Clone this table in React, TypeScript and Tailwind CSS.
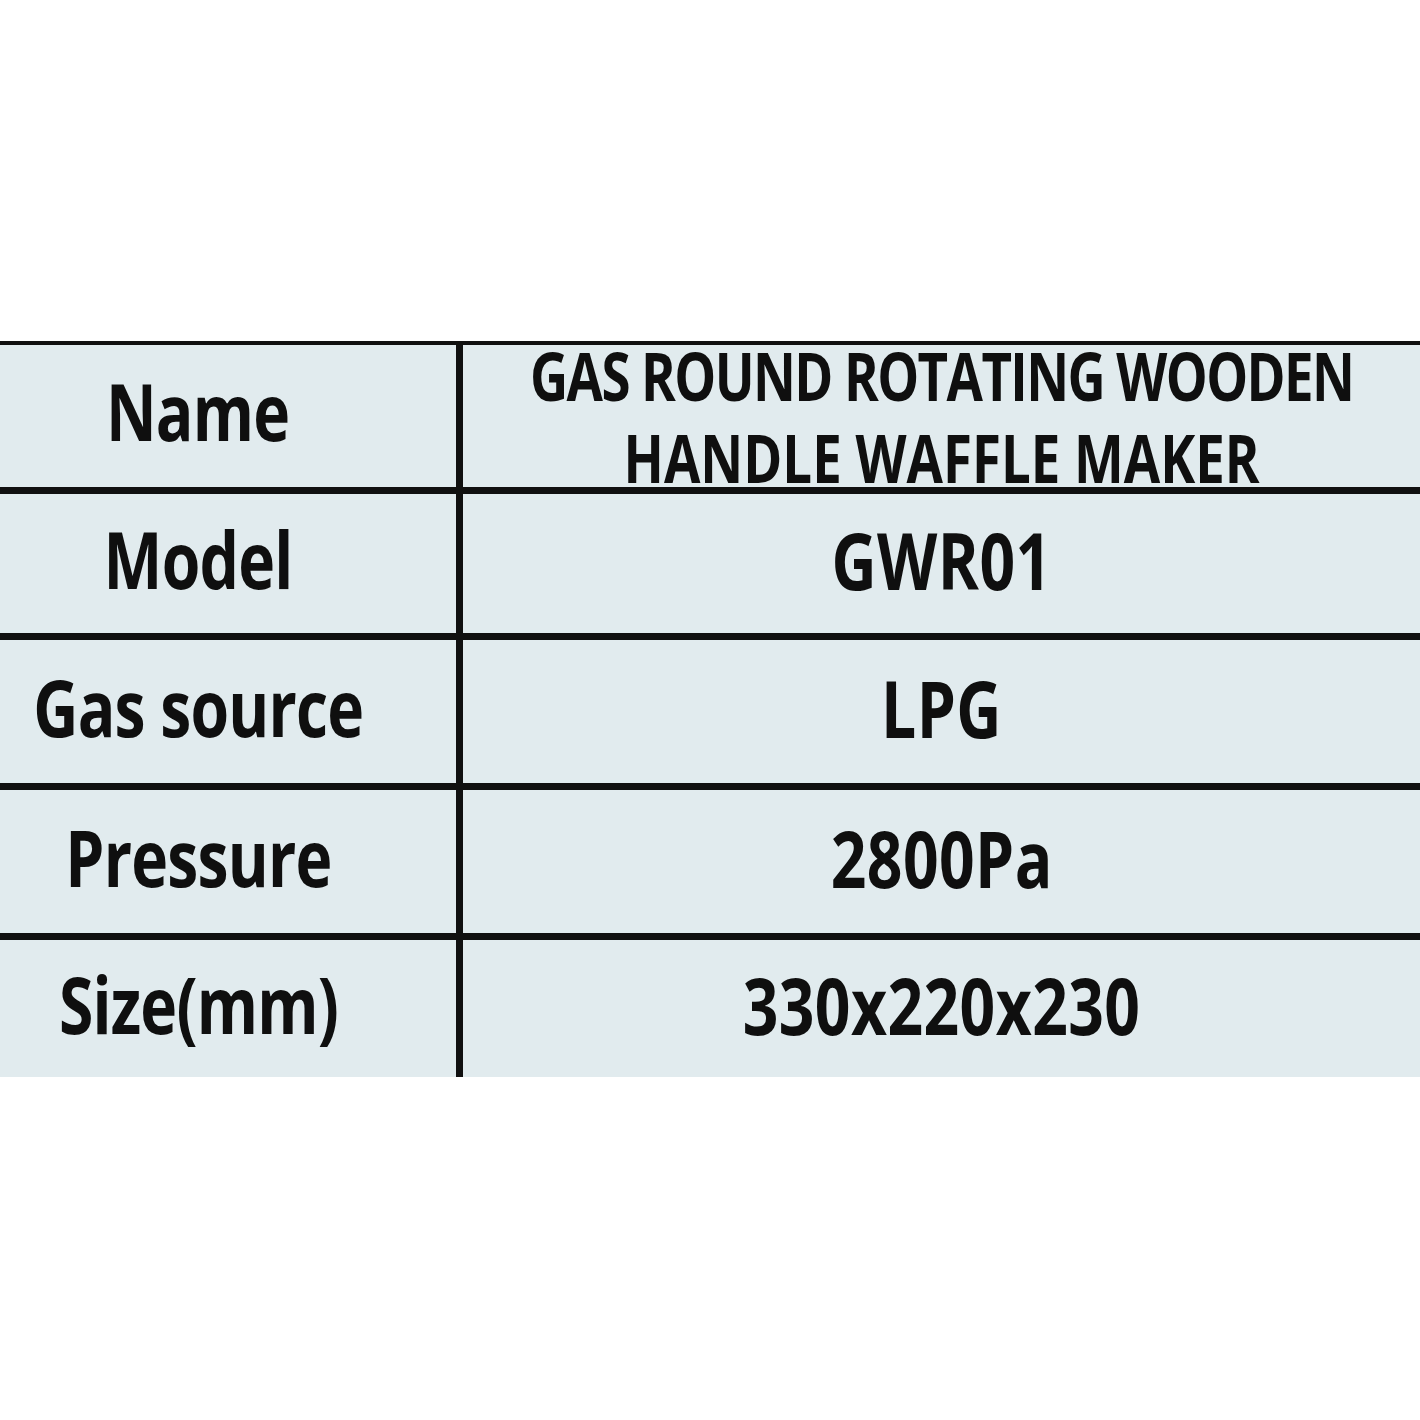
const rows = [
  { label: 'Name', value: ['GAS ROUND ROTATING WOODEN', 'HANDLE WAFFLE MAKER'], h: 'h-[149px]' },
  { label: 'Model', value: ['GWR01'], h: 'h-[146px]' },
  { label: 'Gas source', value: ['LPG'], h: 'h-[150px]' },
  { label: 'Pressure', value: ['2800Pa'], h: 'h-[150px]' },
  { label: 'Size(mm)', value: ['330x220x230'], h: 'h-[137px]' },
];

export default function App() {
  return (
    <div className="w-[1420px] h-[1420px] overflow-hidden bg-white pt-[341px] font-['Open_Sans',sans-serif] text-[#0f0f0f]">
      <div className="border-t-4 border-[#101010] bg-[#e1ebee]">
        {rows.map((r, i) => (
          <div
            key={r.label}
            className={`flex ${r.h} ${i < rows.length - 1 ? 'border-b-[7px] border-[#101010]' : ''}`}
          >
            <div className="w-[463px] shrink-0 border-r-[7px] border-[#101010] flex items-center justify-center pr-[60px] pb-[10px]">
              <span className="inline-block scale-x-[0.8] text-[78px] font-bold leading-none tracking-[-1px] whitespace-nowrap">
                {r.label}
              </span>
            </div>
            <div className="flex-1 min-w-0 flex flex-col items-center justify-center">
              {r.value.length > 1 ? (
                <>
                  <span className="inline-block scale-x-[0.8] text-[66px] font-bold leading-[82px] tracking-[-2px] whitespace-nowrap">
                    {r.value[0]}
                  </span>
                  <span className="inline-block scale-x-[0.8] text-[66px] font-bold leading-[82px] whitespace-nowrap">
                    {r.value[1]}
                  </span>
                </>
              ) : (
                <span className="inline-block scale-x-[0.8] text-[78px] font-bold leading-none tracking-[0.5px] whitespace-nowrap pb-[8px]">
                  {r.value[0]}
                </span>
              )}
            </div>
          </div>
        ))}
      </div>
    </div>
  );
}
